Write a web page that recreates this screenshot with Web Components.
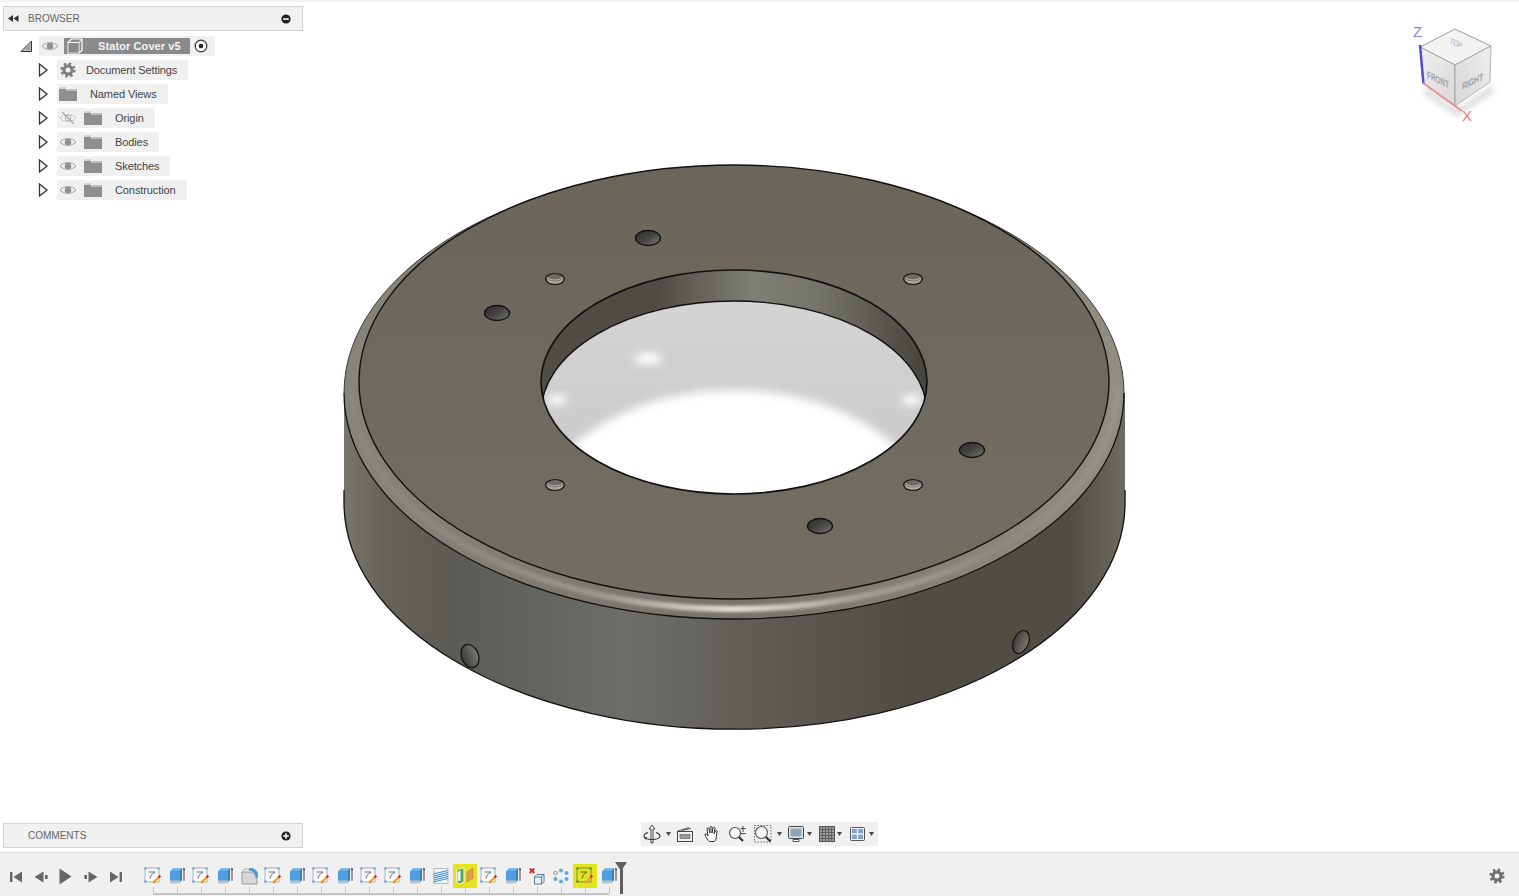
<!DOCTYPE html>
<html lang="en">
<head>
<meta charset="utf-8">
<title>Stator Cover v5</title>
<style>
    html, body { margin: 0; height: 100%; overflow: hidden; background: #fff; }
    body { font-family: "Liberation Sans", Arial, sans-serif; }
</style>
</head>
<body>
<fusion-app></fusion-app>

<script>
// Icons, all inline svg
const svg = (w, h, body, box) => `<svg width="${w}" height="${h}" viewBox="${box || `0 0 ${w} ${h}`}" style="display:block">${body}</svg>`;

const icons = {
    eye: svg(18, 12, `<path d="M1 6C4 1.5 14 1.5 17 6C14 10.5 4 10.5 1 6Z" fill="#e9e9e9" stroke="#a3a3a3"/><circle cx="9" cy="6" r="3.2" fill="#929292"/>`),
    eyeOff: svg(18, 14, `<path d="M1 7C4 2.5 14 2.5 17 7C14 11.5 4 11.5 1 7Z" fill="none" stroke="#b5b5b5" stroke-dasharray="1.5 .8"/><circle cx="9" cy="7" r="2.8" fill="none" stroke="#b5b5b5"/><path d="M3 1L15 13" stroke="#a5a5a5" stroke-width="1.2"/>`),
    folder: svg(18, 14, `<path d="M0 2H7V3.5H18V14H0Z" fill="#8f8f8f"/><path d="M0 0.5H7V1.6H0Z" fill="#bdbdbd"/><path d="M8 2H18V3.4H8Z" fill="#bdbdbd"/>`),
    gear: svg(16, 16, `<circle cx="8" cy="8" r="4" fill="none" stroke="#7c7c7c" stroke-width="3"/><circle cx="8" cy="8" r="6.3" fill="none" stroke="#7c7c7c" stroke-width="2.6" stroke-dasharray="2.47 2.47"/>`),
    arrow: svg(11, 14, `<path d="M1.5 1L9 7L1.5 13Z" fill="#fff" stroke="#333" stroke-width="1.3"/>`),
    arrowOpen: svg(12, 12, `<path d="M1 11.5L11.5 1V11.5Z" fill="#bbb" stroke="#333"/><path d="M5 9.8L9.8 5V9.8Z" fill="#999"/>`),
    box: svg(16, 16, `<path d="M1 4.5L4.5 1H15V12.5L12 15H1Z" fill="none" stroke="#fff" stroke-width="1.2"/><path d="M1 4.5H12V15M12 4.5L15 1" fill="none" stroke="#fff" stroke-width="1"/><path d="M1.5 5H11.5V14.5H1.5Z" fill="#8a8a8a"/>`),
    radio: svg(14, 14, `<circle cx="7" cy="7" r="5.8" fill="#fff" stroke="#333" stroke-width="1.2"/><circle cx="7" cy="7" r="2.3" fill="#222"/>`),
    rewind: svg(11, 7, `<path d="M5 0V7L0 3.5Z M10.5 0V7L5.5 3.5Z" fill="#333"/>`),
    minus: svg(10, 10, `<circle cx="5" cy="5" r="4.6" fill="#222"/><path d="M2.2 5H7.8" stroke="#fff" stroke-width="1.6"/>`),
    plus: svg(10, 10, `<circle cx="5" cy="5" r="4.6" fill="#222"/><path d="M2.2 5H7.8M5 2.2V7.8" stroke="#fff" stroke-width="1.6"/>`),
    drop: svg(5, 4, `<path d="M0 0H5L2.5 4Z" fill="#444"/>`),

    first: svg(12, 12, `<path d="M0 1H2.4V11H0Z M12 .5V11.5L3.5 6Z" fill="#666"/>`),
    prev: svg(14, 12, `<path d="M9.5 .5V11.5L.5 6Z M11 4H13.6V8H11Z" fill="#666"/>`),
    play: svg(13, 17, `<path d="M.5 .5L12.5 8.5L.5 16.5Z" fill="#666"/>`),
    next: svg(14, 12, `<path d="M4.5 .5V11.5L13.5 6Z M.4 4H3V8H.4Z" fill="#666"/>`),
    last: svg(12, 12, `<path d="M9.6 1H12V11H9.6Z M0 .5V11.5L8.5 6Z" fill="#666"/>`),

    sketch: svg(18, 18, `<rect x="1" y="1" width="14" height="14" fill="#f7f7f7" stroke="#a9b4c0"/><path d="M.5 .5h2v2h-2zM13.5 .5h2v2h-2zM.5 13.5h2v2h-2z" fill="#5b9bd5"/><path d="M4.5 5H11L7.5 7.5L6 11.5" fill="none" stroke="#6d7680"/><path d="M9 16L15 10" stroke="#e9a63c" stroke-width="2.400"/><path d="M14.500 10.500L16.300 8.700" stroke="#d8322e" stroke-width="2.400"/>`),
    sketchHi: svg(18, 18, `<rect x="1" y="1" width="14" height="14" fill="none" stroke="#7f8a40"/><path d="M.5 .5h2v2h-2zM13.5 .5h2v2h-2zM.5 13.5h2v2h-2z" fill="#4f8f4a"/><path d="M4.5 5H11L7.5 7.5L6 11.5" fill="none" stroke="#5e6630"/><path d="M9 16L15 10" stroke="#e9a63c" stroke-width="2.400"/><path d="M14.500 10.500L16.300 8.700" stroke="#d8322e" stroke-width="2.400"/>`),
    extrude: svg(16, 18, `<path d="M1 4.5L4.5 1H13V13L10 16H1Z" fill="#4f9ddc"/><path d="M1 4.5L4.5 1H13L11 3.5H2Z" fill="#79b9ec"/><path d="M11 3.5L13 1V13L11 15Z" fill="#3a81bb"/><path d="M1 13.5H11V15L10 16.5H1Z" fill="#b9c3ca"/><path d="M15 14V1.5" stroke="#444" stroke-width="1"/><path d="M13.8 3L15 .8L16 3Z" fill="#333"/>`),
    fillet: svg(17, 17, `<path d="M1 16V4H8C12 4 16 8 16 13V16Z" fill="#d8d8d8" stroke="#9a9a9a"/><path d="M8 1C12.5 1 16.5 5 16.5 10" fill="none" stroke="#4f9ddc" stroke-width="3.4"/><path d="M1 3.8L4 1H8" fill="none" stroke="#aaa"/>`),
    thread: svg(16, 18, `<rect x="1" y="1.5" width="14" height="15" fill="#f4f4f4" stroke="#9aa6b2" stroke-width=".7"/><path d="M0 7L15 3.5M0 11L15 7.5M0 15L15 11.5M1 9L15 5.5M1 13L15 9.5" stroke="#3f8fd2" stroke-width="1.1" fill="none"/>`),
    split: svg(20, 18, `<path d="M1.5 15V6C1.5 3 4 1.5 9 1V15L4.500 17Z" fill="#55ad62" stroke="#f4f4f4"/><path d="M2.500 14.500V6.500C2.500 5 3.500 4 5.500 3.500V13.500Z" fill="#f6f6f6"/><path d="M12 15V5L18 1V11Z" fill="#e09a55" stroke="#b5723a" stroke-width=".5"/>`),
    removed: svg(16, 18, `<path d="M.8 1.5L5.2 6M5.2 1.5L.8 6" stroke="#c9302c" stroke-width="2"/><path d="M5.5 10L8 7.5H15V15L12.5 17H5.5Z" fill="#e9f2f9" stroke="#5b7d99"/><path d="M5.5 10H12.5V17M12.5 10L15 7.5" fill="none" stroke="#5b7d99"/>`),
    pattern: svg(16, 16, `<circle cx="8" cy="2.5" r="2" fill="#5fa8dc"/><circle cx="13.5" cy="5" r="2" fill="#5fa8dc"/><circle cx="13.5" cy="11" r="2" fill="#5fa8dc"/><circle cx="8" cy="13.5" r="2" fill="#5fa8dc"/><circle cx="2.5" cy="11" r="2" fill="#5fa8dc"/><circle cx="2.5" cy="5" r="1.7" fill="#fff" stroke="#888"/>`),

    orbit: svg(18, 20, `<path d="M8 19V5H6.2L9 1L11.800 5H10V19Z" fill="#fff" stroke="#333" stroke-width=".9"/><path d="M5 8.500C2 9.500 1 10.800 1 12C1 14 4.500 15.500 9 15.500C13.500 15.500 17 14 17 12C17 10.800 15.800 9.500 13 8.500" fill="none" stroke="#333" stroke-width="1.2"/><path d="M3 16L1 13.500L4 13Z" fill="#333"/>`),
    look: svg(16, 15, `<rect x=".5" y="4.500" width="15" height="10" fill="#f4f4f4" stroke="#444"/><rect x="3" y="7.500" width="10" height="4" fill="#9b9b9b" stroke="#555" stroke-width=".6"/><path d="M1 4L12 .5M5 3.500L14 1.500" stroke="#555" fill="none"/>`),
    pan: svg(18, 18, `<path d="M5 15C3 12 1.500 10 2 9C2.500 8 4 9 5 11L4 4C4 2.500 6 2.500 6 4L7 8V2.500C7 1 9 1 9 2.500V8L10 3C10.300 1.500 12.200 2 12 3.400L11 9L12.400 6C13 4.800 14.400 5.500 14 6.700L13 14C12.500 15.500 12 16.500 11 16.500H7C6 16.500 5.500 16 5 15Z" fill="#fff" stroke="#333" stroke-width="1"/>`),
    zoom: svg(20, 18, `<circle cx="7" cy="8" r="5.500" fill="#f5f7f8" stroke="#555" stroke-width="1.200"/><path d="M11 12L15 16" stroke="#333" stroke-width="2.200"/><path d="M15 1V7M12.500 3.500H17.500M12.500 8.500H17.500" stroke="#444" stroke-width="1"/>`),
    fit: svg(18, 18, `<rect x=".5" y=".5" width="16.500" height="16.500" fill="none" stroke="#666" stroke-dasharray="1.500 1.500"/><circle cx="7.500" cy="7.500" r="6" fill="#f5f7f8" stroke="#666" stroke-width="1.200"/><path d="M12 12L16.500 16.500" stroke="#333" stroke-width="2.200"/>`),
    display: svg(16, 17, `<rect x=".5" y=".5" width="15" height="12" rx="1" fill="#dfe4e8" stroke="#444"/><rect x="2.500" y="2.500" width="11" height="8" fill="#8fa4b8"/><path d="M5 15.500H11V13.500H5Z" fill="#fff" stroke="#555"/>`),
    grid: svg(16, 16, `<rect x=".5" y=".5" width="15" height="15" fill="#9a9a9a" stroke="#555"/><path d="M3.500 0V16M6.500 0V16M9.500 0V16M12.500 0V16M0 3.500H16M0 6.500H16M0 9.500H16M0 12.500H16" stroke="#555" stroke-width=".8"/>`),
    panes: svg(15, 14, `<rect x=".5" y=".5" width="14" height="13" rx="1" fill="#eef2f5" stroke="#555"/><path d="M2 2H6.800V6.300H2ZM8.200 2H13V6.300H8.200ZM2 7.700H6.800V12H2ZM8.200 7.700H13V12H8.200Z" fill="#7fa3c7"/>`),
    cog: svg(16, 16, `<circle cx="8" cy="8" r="4" fill="none" stroke="#6e6e6e" stroke-width="3"/><circle cx="8" cy="8" r="6.300" fill="none" stroke="#6e6e6e" stroke-width="2.600" stroke-dasharray="2.47 2.47"/>`)
};

class TreeRow extends HTMLElement {
    constructor() {
        super();
        this.attachShadow({ mode: "open" });
    }
    getTemplate() {
        const eye = this.getAttribute("eye");
        const icon = this.getAttribute("icon");
        const template = document.createElement('template');
        template.innerHTML = `
            <span class="twist">${icons.arrow}</span>
            <div class="pill">
                ${eye ? `<span class="eye">${eye === "off" ? icons.eyeOff : icons.eye}</span>` : ""}
                <span class="icon">${icons[icon]}</span>
                <span class="label"><slot></slot></span>
            </div>
            ${this.getStyles()}
        `;
        return template;
    }
    getStyles() {
        return `
        <style>
            :host { display: flex; align-items: center; height: 24px; padding-left: 38px; font-size: 11px; color: #444; }
            .twist { width: 11px; margin-right: 8px; }
            .pill { display: flex; align-items: center; height: 20px; background: #f0f0f0; padding: 0 11px 0 2px; }
            .eye { width: 18px; margin-right: 7px; }
            .icon { display: block; }
            .label { margin-left: 13px; white-space: nowrap; letter-spacing: -.1px; }
            :host([icon="gear"]) .icon { margin-left: 1px; }
            :host([icon="gear"]) .label { margin-left: 10px; }
        </style>`;
    }
    connectedCallback() {
        this.shadowRoot.append(this.getTemplate().content.cloneNode(true));
    }
}
customElements.define('tree-row', TreeRow);

class RootRow extends HTMLElement {
    constructor() {
        super();
        this.attachShadow({ mode: "open" });
        this.shadowRoot.innerHTML = `
            <span class="twist">${icons.arrowOpen}</span>
            <div class="pill">
                <span class="eye">${icons.eye}</span>
                <div class="name"><span class="box">${icons.box}</span><span class="label"><slot></slot></span></div>
                <span class="radio">${icons.radio}</span>
            </div>
            <style>
                :host { display: flex; align-items: center; height: 24px; padding-left: 20px; }
                .twist { width: 12px; margin-right: 7px; }
                .pill { display: flex; align-items: center; height: 20px; width: 176px; background: #f0f0f0; padding-left: 2px; box-sizing: border-box; }
                .eye { width: 18px; margin-right: 5px; }
                .name { display: flex; align-items: center; width: 126px; height: 16px; background: #8a8a8a; color: #f4f4f4; font: bold 11px "Liberation Sans", Arial, sans-serif; }
                .box { margin-left: 3px; }
                .label { margin-left: 15px; white-space: nowrap; letter-spacing: .1px; }
                .radio { margin-left: 4px; }
            </style>`;
    }
}
customElements.define('root-row', RootRow);

class PanelBar extends HTMLElement {
    constructor() {
        super();
        this.attachShadow({ mode: "open" });
        const open = this.hasAttribute("open");
        this.shadowRoot.innerHTML = `
            <span class="rew">${open ? icons.rewind : ""}</span>
            <span class="title"><slot></slot></span>
            <span class="btn">${open ? icons.minus : icons.plus}</span>
            <style>
                :host { display: flex; align-items: center; box-sizing: border-box; width: 300px; height: 25px; background: #f0f0f0; border: 1px solid #d2d2d2; font-size: 10px; color: #666; }
                .rew { width: 11px; margin-left: 4px; }
                .title { flex: 1; margin-left: 9px; }
                .btn { margin-right: 11px; }
            </style>`;
    }
}
customElements.define('panel-bar', PanelBar);

class NavBar extends HTMLElement {
    constructor() {
        super();
        this.attachShadow({ mode: "open" });
        // [icon, left margin]
        const items = [["orbit", 2], ["drop", 5], ["look", 6], ["pan", 10], ["zoom", 7], ["fit", 6], ["drop", 5], ["display", 6], ["drop", 3], ["grid", 7], ["drop", 2], ["panes", 8], ["drop", 4]];
        this.shadowRoot.innerHTML = items.map(([n, m]) => `<span style="margin-left:${m}px">${icons[n]}</span>`).join("") + `
            <style>
                :host { display: flex; align-items: center; box-sizing: border-box; width: 237px; height: 24px; background: #f0f0f0; }
            </style>`;
    }
}
customElements.define('nav-bar', NavBar);

class TimeLine extends HTMLElement {
    constructor() {
        super();
        this.attachShadow({ mode: "open" });
        const steps = "sketch extrude sketch extrude fillet sketch extrude sketch extrude sketch sketch extrude thread split sketch extrude removed pattern sketchHi extrude".split(" ");
        const marks = { split: " hi", sketchHi: " hi" };
        this.shadowRoot.innerHTML = `
            <div class="transport">
                ${["first", "prev", "play", "next", "last"].map(n => `<span>${icons[n]}</span>`).join("")}
            </div>
            <div class="steps">
                ${steps.map((n, i) => `<div class="step${marks[n] || ""}${i === 0 ? " start" : ""}${i === steps.length - 1 ? " end" : ""}"><span>${icons[n]}</span></div>`).join("")}
                <div class="head"></div>
            </div>
            <span class="cog">${icons.cog}</span>
            <style>
                :host { display: flex; box-sizing: border-box; height: 44px; background: #f0f0f0; border-top: 1px solid #dcdcdc; }
                .transport { display: flex; margin-left: 3px; margin-top: 11px; height: 25px; }
                .transport span { display: flex; align-items: center; justify-content: center; width: 25px; }
                .steps { display: flex; margin-left: 13px; flex: 1; }
                .step { position: relative; width: 24px; height: 24px; margin-top: 11px; }
                .step span { display: flex; align-items: center; justify-content: center; height: 24px; }
                .step.hi span { background: #e4e41e; }
                .step::before { content: ""; position: absolute; left: 12px; top: 23px; width: 1px; height: 6px; background: #c4c4c4; }
                .step::after { content: ""; position: absolute; left: 0; right: 0; top: 29px; height: 1.5px; background: #c4c4c4; }
                .step.start::after { left: 12px; }
                .step.end::after { right: 12px; }
                .head { position: relative; width: 0; }
                .head::before { content: ""; position: absolute; left: -6px; top: 9px; border: 6px solid transparent; border-top: 9px solid #5f5f5f; border-bottom: 0; }
                .head::after { content: ""; position: absolute; left: -1px; top: 12px; width: 2.500px; height: 29px; background: #5f5f5f; }
                .cog { margin: 15px 14px 0 0; }
            </style>`;
    }
}
customElements.define('time-line', TimeLine);

class ViewCube extends HTMLElement {
    constructor() {
        super();
        this.attachShadow({ mode: "open" });
        this.shadowRoot.innerHTML = `
            <svg width="100" height="110" viewBox="1405 20 100 110" style="display:block">
                <defs>
                    <filter id="soft"><feGaussianBlur stdDeviation="3"/></filter>
                    <linearGradient id="front" x1="0" y1="0" x2="1" y2="1"><stop offset="0" stop-color="#f0f0f0"/><stop offset="1" stop-color="#d8d8d8"/></linearGradient>
                    <linearGradient id="right" x1="0" y1="1" x2="1" y2="0"><stop offset="0" stop-color="#d6d6d6"/><stop offset="1" stop-color="#efefef"/></linearGradient>
                </defs>
                <path d="M1425 86L1456 110L1492 86L1494 92L1456 116L1425 94Z" fill="#aaa" opacity=".5" filter="url(#soft)"/>
                <path d="M1455 29L1491 46L1455 65L1420 47Z" fill="#f2f2f2" stroke="#777" stroke-width=".7"/>
                <path d="M1420 47L1455 65V106L1423 83Z" fill="url(#front)" stroke="#8a8a8a" stroke-width=".6"/>
                <path d="M1455 65L1491 46L1490 82L1455 106Z" fill="url(#right)" stroke="#8a8a8a" stroke-width=".6"/>
                <text transform="matrix(.65 .3 -.35 .75 1449 43)" font-size="9" fill="#a6a6a6" font-family="Liberation Sans">TOP</text>
                <text transform="matrix(.64 .3 0 1 1427 78)" font-size="10" fill="#a0a0a0" font-family="Liberation Sans" font-weight="bold">FRONT</text>
                <text transform="matrix(.68 -.32 0 1 1462 90)" font-size="10" fill="#a0a0a0" font-family="Liberation Sans" font-weight="bold">RIGHT</text>
                <path d="M1420 45L1423.500 84" stroke="#4f4fd0" stroke-width="2.500"/>
                <path d="M1423 83L1462 111" stroke="#e88f8f" stroke-width="2"/>
                <text x="1413" y="37" font-size="15" fill="#8585e6" font-family="Liberation Sans">Z</text>
                <text x="1462" y="121" font-size="15" fill="#f07c7c" font-family="Liberation Sans">X</text>
            </svg>
            <style>:host { display: block; }</style>`;
    }
}
customElements.define('view-cube', ViewCube);

class ModelView extends HTMLElement {
    constructor() {
        super();
        this.attachShadow({ mode: "open" });
        const bigHoles = [[648, 238], [497, 313], [972, 450], [820, 526]];
        const tapped = [[555, 279], [913, 279], [555, 485], [913, 485]];
        this.shadowRoot.innerHTML = `
            <svg width="1519" height="852" viewBox="0 0 1519 852" style="display:block">
                <defs>
                    <linearGradient id="side" gradientUnits="userSpaceOnUse" x1="344" y1="0" x2="1125" y2="0">
                        <stop offset="0" stop-color="#7a766a"/>
                        <stop offset=".05" stop-color="#66635a"/>
                        <stop offset=".14" stop-color="#5c5b55"/>
                        <stop offset=".36" stop-color="#6d6e69"/>
                        <stop offset=".5" stop-color="#625f59"/>
                        <stop offset=".72" stop-color="#504d45"/>
                        <stop offset=".93" stop-color="#504d45"/>
                        <stop offset="1" stop-color="#6f6b5f"/>
                    </linearGradient>
                    <linearGradient id="face" x1="0" y1="0" x2="0" y2="1">
                        <stop offset="0" stop-color="#6b665b"/>
                        <stop offset="1" stop-color="#736e64"/>
                    </linearGradient>
                    <linearGradient id="rim" gradientUnits="userSpaceOnUse" x1="344" y1="0" x2="1125" y2="0">
                        <stop offset="0" stop-color="#87847a"/>
                        <stop offset=".5" stop-color="#77736a"/>
                        <stop offset="1" stop-color="#918f84"/>
                    </linearGradient>
                    <linearGradient id="shine" gradientUnits="userSpaceOnUse" x1="352" y1="0" x2="1116" y2="0">
                        <stop offset="0" stop-color="#8b897e" stop-opacity=".7"/>
                        <stop offset=".15" stop-color="#8c8b82"/>
                        <stop offset=".33" stop-color="#9a998f"/>
                        <stop offset=".5" stop-color="#e2e0d8"/>
                        <stop offset=".66" stop-color="#a3a196"/>
                        <stop offset=".85" stop-color="#8e8c81"/>
                        <stop offset="1" stop-color="#96948a"/>
                    </linearGradient>
                    <linearGradient id="wall" gradientUnits="userSpaceOnUse" x1="541" y1="0" x2="927" y2="0">
                        <stop offset="0" stop-color="#4f4d46"/>
                        <stop offset=".3" stop-color="#4e4c45"/>
                        <stop offset=".55" stop-color="#7f7e77"/>
                        <stop offset=".72" stop-color="#74736c"/>
                        <stop offset="1" stop-color="#45433c"/>
                    </linearGradient>
                    <linearGradient id="floor" x1="0" y1="0" x2="0" y2="1">
                        <stop offset="0" stop-color="#d4d4d4"/>
                        <stop offset="1" stop-color="#c8c8c8"/>
                    </linearGradient>
                    <linearGradient id="well" x1="0" y1="0" x2="1" y2="1">
                        <stop offset="0" stop-color="#2b2b2b"/>
                        <stop offset=".5" stop-color="#454543"/>
                        <stop offset="1" stop-color="#7a7a76"/>
                    </linearGradient>
                    <linearGradient id="port" x1="0" y1="0" x2="1" y2="0">
                        <stop offset="0" stop-color="#3b3a36"/>
                        <stop offset="1" stop-color="#7a7974"/>
                    </linearGradient>
                    <filter id="b2" x="-10%" y="-10%" width="120%" height="120%"><feGaussianBlur stdDeviation="1.500"/></filter>
                    <filter id="b4" x="-60%" y="-60%" width="220%" height="220%"><feGaussianBlur stdDeviation="4"/></filter>
                    <filter id="b8" x="-20%" y="-20%" width="140%" height="140%"><feGaussianBlur stdDeviation="5"/></filter>
                    <clipPath id="holeClip"><ellipse cx="734" cy="382" rx="193" ry="112"/></clipPath>
                    <clipPath id="floorClip"><ellipse cx="734" cy="413" rx="193" ry="112"/></clipPath>
                </defs>

                <!-- body side -->
                <path d="M344 393V503A390 226 0 0 0 1125 503V393Z" fill="url(#side)"/>
                <path d="M344 490V503A390 226 0 0 0 1125 503V490" fill="none" stroke="#111" stroke-width="1.300"/>

                <!-- rounded rim -->
                <ellipse cx="734" cy="393" rx="390" ry="226" fill="url(#rim)"/>
                <path d="M351 388A383 221 0 0 0 1117 388" fill="none" stroke="url(#shine)" stroke-width="6" filter="url(#b2)"/>
                <path d="M344 393A390 226 0 0 0 1124 393" fill="none" stroke="#111" stroke-width="1.300"/>
                <path d="M344 393A390 226 0 0 1 1124 393" fill="none" stroke="#3a3a36" stroke-width="1"/>

                <!-- top face -->
                <ellipse cx="734" cy="382" rx="375" ry="217" fill="url(#face)" stroke="#111" stroke-width="1.400"/>

                <!-- centre bore -->
                <ellipse cx="734" cy="382" rx="193" ry="112" fill="url(#wall)"/>
                <g clip-path="url(#holeClip)">
                    <g clip-path="url(#floorClip)">
                        <rect x="540" y="300" width="390" height="200" fill="url(#floor)"/>
                        <ellipse cx="734" cy="535" rx="205" ry="145" fill="#fff" filter="url(#b8)"/>
                        <ellipse cx="648" cy="359" rx="13" ry="6" fill="#fff" filter="url(#b4)"/>
                        <ellipse cx="557" cy="400" rx="10" ry="5" fill="#fff" filter="url(#b4)"/>
                        <ellipse cx="911" cy="400" rx="10" ry="5" fill="#fff" filter="url(#b4)"/>
                    </g>
                    <ellipse cx="734" cy="413" rx="193" ry="112" fill="none" stroke="#111" stroke-width="1.400"/>
                </g>
                <ellipse cx="734" cy="382" rx="193" ry="112" fill="none" stroke="#111" stroke-width="1.600"/>

                <!-- holes in the face -->
                ${bigHoles.map(([x, y]) => `<ellipse cx="${x}" cy="${y}" rx="12.500" ry="7.500" fill="url(#well)" stroke="#111" stroke-width="1.300"/>`).join("")}
                ${tapped.map(([x, y]) => `
                    <ellipse cx="${x}" cy="${y}" rx="9.500" ry="5.500" fill="#6d6b63" stroke="#1a1a1a" stroke-width="1.200"/>
                    <path d="M${x - 7.500} ${y - 2}a7.500 3 0 0 0 15 0M${x - 7.500} ${y}a7.500 3 0 0 0 15 0M${x - 7} ${y + 1.500}a7 2.500 0 0 0 14 0" fill="none" stroke="#c4c3bb" stroke-width=".9"/>`).join("")}

                <!-- radial holes in the side -->
                <ellipse cx="470" cy="656" rx="8.500" ry="12" transform="rotate(-22 470 656)" fill="url(#port)" stroke="#111" stroke-width="1.200"/>
                <ellipse cx="1021" cy="642" rx="7.500" ry="12" transform="rotate(22 1021 642)" fill="url(#port)" stroke="#111" stroke-width="1.200"/>
            </svg>
            <style>:host { display: block; }</style>`;
    }
}
customElements.define('model-view', ModelView);

class FusionApp extends HTMLElement {
    constructor() {
        super();
        this.attachShadow({ mode: "open" });
        this.shadowRoot.innerHTML = `
            <div class="view">
                <model-view class="model"></model-view>
                <view-cube class="cube"></view-cube>
                <section class="browser">
                    <panel-bar open>BROWSER</panel-bar>
                    <div class="tree">
                        <root-row>Stator Cover v5</root-row>
                        <tree-row icon="gear">Document Settings</tree-row>
                        <tree-row icon="folder">Named Views</tree-row>
                        <tree-row eye="off" icon="folder">Origin</tree-row>
                        <tree-row eye="on" icon="folder">Bodies</tree-row>
                        <tree-row eye="on" icon="folder">Sketches</tree-row>
                        <tree-row eye="on" icon="folder">Construction</tree-row>
                    </div>
                </section>
                <footer class="foot">
                    <panel-bar class="comments">COMMENTS</panel-bar>
                    <nav-bar></nav-bar>
                </footer>
            </div>
            <time-line></time-line>
            <style>
                :host { display: flex; flex-direction: column; width: 1519px; height: 896px; font-family: "Liberation Sans", Arial, sans-serif; }
                .view { position: relative; flex: 1; display: flex; flex-direction: column; justify-content: space-between; box-sizing: border-box; padding: 6px 0 4px 3px; background: linear-gradient(#f1f1f1 2px, #fff 2px); }
                .model { position: absolute; left: 0; top: 0; }
                .cube { position: absolute; right: 14px; top: 20px; }
                .browser, .foot { position: relative; }
                .tree { margin-top: 3px; margin-left: -3px; }
                .foot { display: flex; align-items: flex-start; }
                .comments { margin-right: 338px; margin-top: 1px; }
            </style>`;
    }
}
customElements.define('fusion-app', FusionApp);
</script>
</body>
</html>
